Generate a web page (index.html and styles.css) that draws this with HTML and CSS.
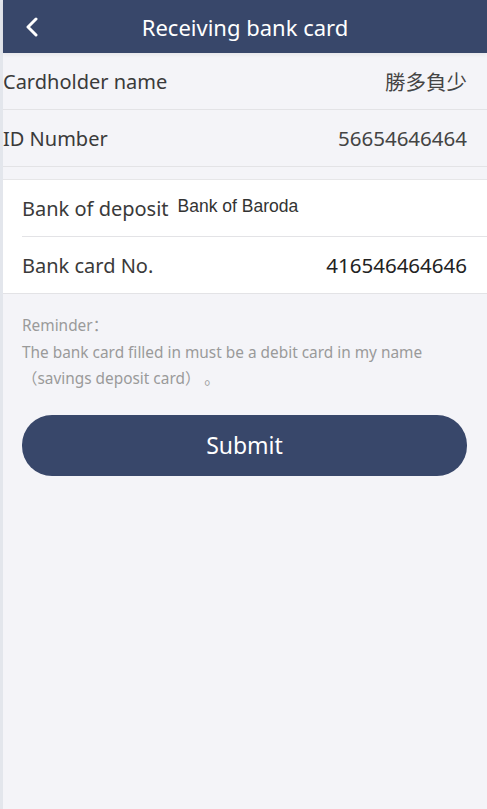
FILE: index.html
```html
<!DOCTYPE html>
<html lang="en">
<head>
  <meta charset="UTF-8" />
  <meta name="viewport" content="width=device-width, initial-scale=1.0" />
  <title>Receiving bank card</title>
  <link rel="stylesheet" href="styles.css">
</head>
<body>
  <div class="page">
    <header class="topbar">
      <a class="back" href="#">
        <svg width="14" height="20" viewBox="0 0 14 20">
          <path d="M11 2 L3 10 L11 18" fill="none" stroke="#fff" stroke-width="3" stroke-linecap="round" stroke-linejoin="round" />
        </svg>
      </a>
      <h1>Receiving bank card</h1>
    </header>

    <div class="info">
      <div class="row">
        <span class="label">Cardholder name</span>
        <span class="value">勝多負少</span>
      </div>
      <div class="row">
        <span class="label">ID Number</span>
        <span class="value">56654646464</span>
      </div>
    </div>

    <div class="card">
      <div class="field">
        <span class="label">Bank of deposit</span>
        <input type="text" class="bank" value="Bank of Baroda" readonly />
      </div>
      <div class="field">
        <span class="label">Bank card No.</span>
        <span class="value dark">416546464646</span>
      </div>
    </div>

    <div class="reminder">
      <p>Reminder：</p>
      <p>The bank card filled in must be a debit card in my name （savings deposit card） 。</p>
    </div>

    <button class="submit">Submit</button>
  </div>
</body>
</html>
```

FILE: styles.css
```css
html, body {
  margin: 0;
  height: 100%;
}
body {
  background-color: #e3e6ec;
  font-family: "Noto Sans", "Noto Sans CJK SC", sans-serif;
  padding-left: 3px;
  box-sizing: border-box;
}
.page {
  background-color: #f4f4f8;
  min-height: 100%;
}
.topbar {
  height: 53px;
  background-color: #38476a;
  display: flex;
  align-items: center;
  justify-content: center;
  position: relative;
  box-shadow: 0 2px 4px rgba(0, 0, 0, 0.06);
}
.back {
  position: absolute;
  left: 22px;
  top: 17px;
  display: block;
}
.topbar h1 {
  margin: 0;
  color: white;
  font-size: 22px;
  font-weight: normal;
}
.row {
  height: 56px;
  display: flex;
  align-items: center;
  justify-content: space-between;
  padding-right: 20px;
  border-bottom: 1px solid #e3e3e6;
  font-size: 20px;
  color: #3a3a3a;
}
.row .value {
  color: #444;
  font-size: 20.5px;
}
.card {
  margin-top: 12px;
  background: white;
  border-top: 1px solid #e6e6e8;
  border-bottom: 1px solid #e3e3e6;
  padding-left: 19px;
}
.field {
  height: 56px;
  display: flex;
  align-items: center;
  padding-right: 20px;
  font-size: 20px;
  color: #3a3a3a;
}
.field + .field {
  border-top: 1px solid #e3e3e6;
}
.field .value {
  margin-left: auto;
  font-size: 20.5px;
}
.dark {
  color: #222;
}
.bank {
  border: none;
  outline: none;
  background: transparent;
  font-family: "Liberation Sans", Arial, sans-serif;
  font-size: 17.5px;
  color: #333;
  margin-left: 9px;
  padding: 0;
  flex: 1;
  margin-top: -3px;
}
.reminder {
  padding: 19px 19px 0;
  font-size: 15.4px;
  color: #9a9a9a;
  line-height: 26.5px;
}
.reminder p {
  margin: 0;
}
.submit {
  display: block;
  margin: 22px 20px 0 19px;
  width: calc(100% - 39px);
  height: 61px;
  border: none;
  border-radius: 30px;
  background: #38476a;
  color: white;
  font-family: "Noto Sans", sans-serif;
  font-size: 23px;
  cursor: pointer;
}
```
